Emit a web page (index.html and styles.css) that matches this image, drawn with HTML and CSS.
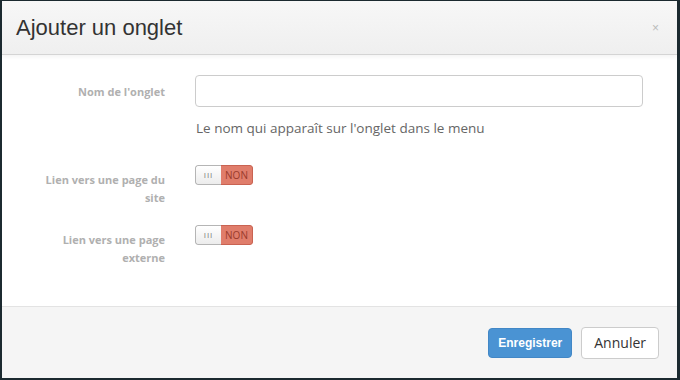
FILE: index.html
```html
<!DOCTYPE html>
<html lang="fr">
<head>
  <meta charset="UTF-8">
  <meta name="viewport" content="width=device-width, initial-scale=1.0">
  <title>Ajouter un onglet</title>
  <link rel="stylesheet" href="styles.css">
</head>
<body>
  <div class="modal">
    <div class="modal-header">
      <h1>Ajouter un onglet</h1>
      <span class="close">&times;</span>
    </div>

    <form class="modal-body">
      <div class="form-row row-text">
        <label class="form-label" for="tabName">Nom de l'onglet</label>
        <div class="form-field">
          <input type="text" id="tabName" name="tabName">
          <p class="help">Le nom qui apparaît sur l'onglet dans le menu</p>
        </div>
      </div>

      <div class="form-row row-switch">
        <label class="form-label">Lien vers une page du site</label>
        <div class="form-field">
          <div class="switch"><span class="switch-handle">III</span><span class="switch-off">NON</span></div>
        </div>
      </div>

      <div class="form-row row-switch">
        <label class="form-label">Lien vers une page externe</label>
        <div class="form-field">
          <div class="switch"><span class="switch-handle">III</span><span class="switch-off">NON</span></div>
        </div>
      </div>
    </form>

    <div class="modal-footer">
      <button type="button" class="btn btn-primary">Enregistrer</button>
      <button type="button" class="btn btn-default">Annuler</button>
    </div>
  </div>
</body>
</html>
```

FILE: styles.css
```css
html, body {
  height: 100%;
}
body {
  margin: 0;
  background-color: #1c2a30;
  font-family: "Open Sans", "DejaVu Sans", sans-serif;
  padding: 1px 3px 2px 2px;
  box-sizing: border-box;
}
.modal {
  height: 100%;
  background-color: #fff;
  display: flex;
  flex-direction: column;
}
.modal-header {
  height: 53px;
  display: flex;
  align-items: center;
  justify-content: space-between;
  padding: 0 18px 0 14px;
  background: linear-gradient(#f7f7f7, #efefef);
  border-bottom: 1px solid #d4d4d4;
  box-shadow: 0 2px 4px rgba(0,0,0,0.05);
}
.modal-header h1 {
  margin: 0;
  font-family: "Liberation Sans", Arial, sans-serif;
  font-size: 22px;
  font-weight: normal;
  color: #333;
}
.close {
  color: #bbb;
  font-size: 12px;
  font-family: "Liberation Sans", Arial, sans-serif;
}
.modal-body {
  flex: 1;
  padding: 20px 0 0 0;
  margin: 0;
}
.form-row {
  display: flex;
}
.row-text {
  margin-bottom: 24px;
}
.row-switch {
  margin-bottom: 14px;
}
.form-label {
  width: 125px;
  margin-left: 38px;
  padding-right: 30px;
  text-align: right;
  font-size: 11px;
  font-weight: bold;
  color: #b0b0b0;
  line-height: 18px;
  padding-top: 8px;
}
.row-switch .form-label {
  padding-top: 10px;
}
.form-field {
  width: 448px;
}
input {
  width: 100%;
  height: 32px;
  padding: 6px 10px;
  border: 1px solid #ccc;
  border-radius: 4px;
  box-sizing: border-box;
  font-size: 14px;
}
.help {
  margin: 12px 0 0 1px;
  font-size: 13.5px;
  color: #666;
}
.switch {
  display: inline-flex;
  height: 20px;
  border-radius: 3px;
  overflow: hidden;
  font-size: 10px;
  line-height: 18px;
}
.switch-handle {
  width: 25px;
  text-align: center;
  color: #777;
  font-size: 8px;
  letter-spacing: 1px;
  background: linear-gradient(#fff, #ececec);
  border: 1px solid #b5b5b5;
  border-right: none;
  border-radius: 3px 0 0 3px;
}
.switch-off {
  width: 31px;
  text-align: center;
  color: #9a3a2b;
  background-color: #e07d6b;
  border: 1px solid #c96352;
  border-left: none;
  border-radius: 0 3px 3px 0;
}
.modal-footer {
  height: 72px;
  display: flex;
  align-items: center;
  justify-content: flex-end;
  gap: 9px;
  padding-right: 18px;
  background-color: #f5f5f5;
  border-top: 1px solid #e3e3e3;
  box-sizing: border-box;
}
.btn {
  border-radius: 4px;
  cursor: pointer;
}
.btn-primary {
  height: 30px;
  padding: 0 9px;
  background-color: #4a93d3;
  border: 1px solid #4287c6;
  color: #fff;
  font-family: "Liberation Sans", Arial, sans-serif;
  font-weight: bold;
  font-size: 12px;
}
.btn-default {
  height: 32px;
  padding: 0 12px;
  background-color: #fff;
  border: 1px solid #ccc;
  color: #333;
  font-family: "Open Sans", "DejaVu Sans", sans-serif;
  font-size: 14px;
}
```
